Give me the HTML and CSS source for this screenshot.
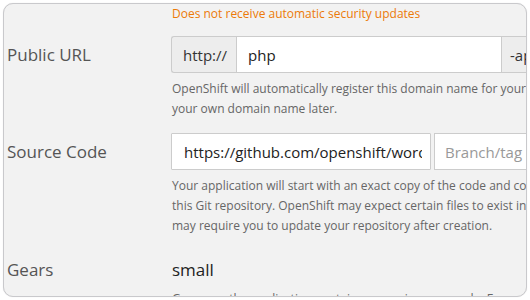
FILE: index.html
```html
<!DOCTYPE html>
<html>
<head>
<meta charset="utf-8">
<link rel="stylesheet" href="styles.css">
</head>
<body>
<div class="frame">
  <div class="form">
    <div class="row">
      <div class="label"></div>
      <div class="field">
        <p class="warn">Does not receive automatic security updates</p>
      </div>
    </div>
    <div class="row row-url">
      <label class="label">Public URL</label>
      <div class="field">
        <div class="input-group">
          <span class="addon addon-left">http://</span>
          <input class="control control-mid" type="text" value="php">
          <span class="addon addon-right">-app-namespace.rhcloud.com</span>
        </div>
        <p class="help">OpenShift will automatically register this domain name for your application. You can add<br>your own domain name later.</p>
      </div>
    </div>
    <div class="row row-source">
      <label class="label">Source Code</label>
      <div class="field">
        <div class="source-inputs">
          <input class="control control-repo" type="text" value="https://github.com/openshift/wordpress-example">
          <input class="control control-branch" type="text" placeholder="Branch/tag">
        </div>
        <p class="help">Your application will start with an exact copy of the code and configuration provided in<br>this Git repository. OpenShift may expect certain files to exist in the directory root, and<br>may require you to update your repository after creation.</p>
      </div>
    </div>
    <div class="row row-gears">
      <label class="label">Gears</label>
      <div class="field">
        <div class="static">small</div>
        <p class="help help-tight">Gears are the application containers running your code. For most applications, the 'small' gear size provides plenty of resources.</p>
      </div>
    </div>
  </div>
</div>
</body>
</html>
```
FILE: styles.css
```css
* { box-sizing: border-box; }
html, body { margin: 0; padding: 0; background: #ffffff; }
body { font-family: "Open Sans", "Liberation Sans", sans-serif; }

.frame {
  margin: 3px;
  width: 524px;
  height: 294px;
  border: 1px solid #c9c9cc;
  border-radius: 10px;
  background: #f2f2f2;
  overflow: hidden;
  box-shadow: 0 0 1px rgba(0,0,0,0.15);
}

.form {
  width: 800px;
}

.row {
  display: grid;
  grid-template-columns: 167px 620px;
  align-items: start;
}

.label {
  padding-left: 3px;
  font-size: 17px;
  color: #555555;
  line-height: 37px;
}

.field { min-width: 0; }

.warn {
  margin: 0;
  padding-left: 1px;
  font-size: 12px;
  line-height: 20px;
  color: #ec7a08;
}

.row-url { margin-top: 12px; }
.row-source { margin-top: 14px; }
.row-gears { margin-top: 15px; }

.input-group {
  display: flex;
  height: 37px;
}

.addon {
  flex-shrink: 0;
  display: flex;
  align-items: center;
  background: #ededed;
  border: 1px solid #cccccc;
  font-size: 15px;
  color: #333333;
  white-space: nowrap;
}
.addon-left {
  width: 65px;
  padding-left: 11px;
  border-right: none;
  border-radius: 3px 0 0 3px;
}
.addon-right {
  padding-left: 8px;
  padding-right: 10px;
  border-left: none;
}

.control {
  flex-shrink: 0;
  height: 37px;
  border: 1px solid #cccccc;
  background: #ffffff;
  font-family: "Open Sans", "Liberation Sans", sans-serif;
  font-size: 15px;
  color: #222222;
  padding: 0 8px;
  outline: none;
  margin: 0;
}
.control::placeholder { color: #999999; }
.control-mid {
  width: 266px;
  padding-left: 11px;
}

.source-inputs {
  display: flex;
  gap: 3px;
}
.control-repo { width: 260px; padding-left: 12px; border-radius: 1px; }
.control-branch { width: 150px; padding-left: 10px; }

.help {
  margin: 6px 0 0 0;
  padding-left: 1px;
  font-size: 12px;
  line-height: 20px;
  color: #666666;
  white-space: nowrap;
}
.help-tight { margin-top: 7px; }

.static {
  font-size: 17px;
  padding-top: 6px;
  line-height: 25px;
  color: #222222;
  padding-left: 1px;
}
```
